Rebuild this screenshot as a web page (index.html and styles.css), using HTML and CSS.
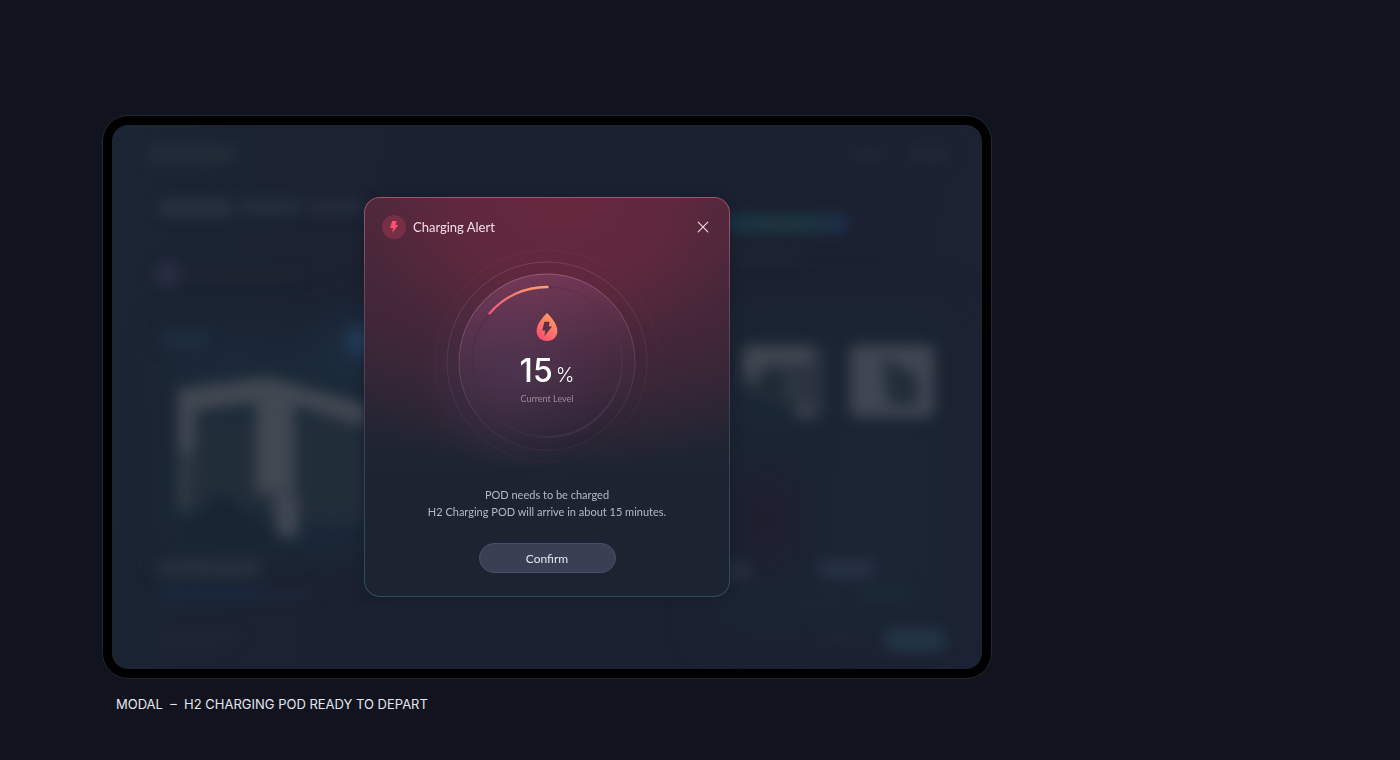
FILE: index.html
```
<!DOCTYPE html>
<html lang="en">
<head>
    <meta charset="UTF-8">
    <meta name="viewport" content="width=device-width, initial-scale=1.0">
    <title>Charging Alert</title>
    <link rel="stylesheet" href="styles.css">
</head>
<body>

    <figure class="showcase">
        <div class="device">
            <div class="screen">
                <!-- blurred dashboard behind the modal -->
                <svg class="backdrop" viewBox="0 0 870 544" preserveAspectRatio="none" aria-hidden="true">
                    <defs>
                        <filter id="soft" x="-20%" y="-20%" width="140%" height="140%" color-interpolation-filters="sRGB"><feGaussianBlur stdDeviation="7"/></filter>
                        <filter id="wide" x="-50%" y="-50%" width="200%" height="200%" color-interpolation-filters="sRGB"><feGaussianBlur stdDeviation="22"/></filter>
                        <linearGradient id="bar" x1="0" x2="1" y1="0" y2="0">
                            <stop offset="0" stop-color="#1c3543"/>
                            <stop offset="0.6" stop-color="#1d3943"/>
                            <stop offset="1" stop-color="#1d2f4e"/>
                        </linearGradient>
                    </defs>
                    <g filter="url(#wide)">
                        <rect x="60" y="210" width="210" height="220" fill="#1b2c3c" opacity="0.7"/>
                        <rect x="600" y="180" width="230" height="330" fill="#1b2735" opacity="0.7"/>
                        <rect x="630" y="350" width="50" height="90" fill="#201c2e"/>
                        <ellipse cx="248" cy="216" rx="26" ry="24" fill="#1f344a"/>
                    </g>
                    <g filter="url(#soft)">
                        <rect x="36" y="20" width="88" height="18" fill="#232d3a"/>
                        <rect x="48" y="76" width="72" height="14" fill="#2c3543"/>
                        <rect x="128" y="74" width="60" height="16" fill="#242e3c"/>
                        <rect x="196" y="74" width="60" height="16" fill="#232b3c"/>
                        <circle cx="56" cy="149" r="12" fill="#2b2e45"/>
                        <rect x="76" y="146" width="110" height="7" fill="#1f2532"/>
                        <rect x="50" y="206" width="46" height="18" fill="#1e2d3e"/>
                        <circle cx="250" cy="216" r="15" fill="#243b57"/>

                        <path d="M76 296L252 290V398L180 396L110 376L76 388Z" fill="#222d3a"/>
                        <path d="M66 264L156 252L256 280V302L182 280V368H144V278L84 286L82 330H66Z" fill="#424852"/>
                        <path d="M66 326H82L78 386H66Z" fill="#303a45"/>
                        <path d="M160 370H186V412H166Z" fill="#414753"/>
                        <path d="M70 406L110 366L150 404L186 420H80Z" fill="#192432"/>

                        <rect x="46" y="436" width="102" height="14" fill="#283341"/>
                        <rect x="48" y="464" width="100" height="12" fill="#1b2942"/>
                        <rect x="150" y="464" width="50" height="10" fill="#1e273a"/>
                        <rect x="44" y="508" width="80" height="10" fill="#202534"/>

                        <rect x="738" y="24" width="36" height="12" fill="#202735"/>
                        <rect x="796" y="22" width="40" height="14" fill="#212837"/>
                        <rect x="612" y="90" width="124" height="17" fill="url(#bar)"/>
                        <rect x="612" y="126" width="80" height="10" fill="#1f2534"/>

                        <rect x="630" y="220" width="82" height="74" rx="10" fill="#2b3440"/>
                        <path d="M632 222H700V238H650L646 252H632Z" fill="#434953"/>
                        <circle cx="660" cy="258" r="12" fill="#1d2835"/>
                        <path d="M628 262L690 282L680 302H628Z" fill="#1b2634"/>
                        <circle cx="692" cy="286" r="9" fill="#3a414d"/>
                        <rect x="738" y="220" width="84" height="72" rx="6" fill="#404752"/>
                        <path d="M770 232L806 250V280H776Z" fill="#222d3a"/>

                        <rect x="612" y="438" width="26" height="16" fill="#282f40"/>
                        <rect x="708" y="436" width="54" height="15" fill="#293448"/>
                        <rect x="746" y="464" width="54" height="8" fill="#1d2c3b"/>
                        <rect x="772" y="504" width="62" height="22" rx="10" fill="#233645"/>
                        <rect x="706" y="508" width="50" height="9" fill="#1f2534"/>
                    </g>
                </svg>

                <div class="modal" role="dialog" aria-labelledby="modal-title">
                    <header class="modal-header">
                        <span class="alert-icon">
                            <svg width="10" height="14" viewBox="0 0 10 14" aria-hidden="true">
                                <path d="M3.2 1H7.6L6.6 4.9H9.2L3.2 13L4.2 8.1H1Z" fill="#ff4f70"/>
                            </svg>
                        </span>
                        <h1 id="modal-title">Charging Alert</h1>
                        <button class="close" type="button" aria-label="Close">
                            <svg width="12" height="12" viewBox="0 0 12 12" aria-hidden="true">
                                <path d="M1.2 1.2L10.8 10.8M10.8 1.2L1.2 10.8" stroke="#f3dfe7" stroke-width="1.1" stroke-linecap="round"/>
                            </svg>
                        </button>
                    </header>

                    <div class="dial">
                        <svg class="dial-rings" viewBox="0 0 230 230" fill="none" aria-hidden="true">
                            <defs>
                                <linearGradient id="disc" x1="0.4" y1="0" x2="0.6" y2="1">
                                    <stop offset="0" stop-color="#8c4c74" stop-opacity="0.45"/>
                                    <stop offset="0.5" stop-color="#5c3c5e" stop-opacity="0.22"/>
                                    <stop offset="1" stop-color="#241c2c" stop-opacity="0.3"/>
                                </linearGradient>
                                <linearGradient id="ring" x1="0.4" y1="0" x2="0.6" y2="1">
                                    <stop offset="0" stop-color="#d897b4" stop-opacity="0.42"/>
                                    <stop offset="0.55" stop-color="#b58bb0" stop-opacity="0.22"/>
                                    <stop offset="1" stop-color="#b58bb0" stop-opacity="0.06"/>
                                </linearGradient>
                                <linearGradient id="track" x1="0" y1="0.2" x2="0.7" y2="1">
                                    <stop offset="0" stop-color="#3d2748" stop-opacity="0.4"/>
                                    <stop offset="0.5" stop-color="#3d2748" stop-opacity="0.1"/>
                                    <stop offset="1" stop-color="#6a5a78" stop-opacity="0.25"/>
                                </linearGradient>
                                <linearGradient id="level" x1="1" y1="0" x2="0" y2="1">
                                    <stop offset="0" stop-color="#ff9d6c"/>
                                    <stop offset="1" stop-color="#f0567c"/>
                                </linearGradient>
                            </defs>
                            <circle cx="115" cy="115" r="112" stroke="url(#ring)" stroke-opacity="0.12"/>
                            <circle cx="115" cy="115" r="100" stroke="url(#ring)" stroke-opacity="0.5"/>
                            <circle cx="115" cy="115" r="88" fill="url(#disc)" stroke="url(#ring)"/>
                            <circle cx="115" cy="115" r="75" stroke="url(#track)" stroke-width="2"/>
                            <path d="M115.5 40A75 75 0 0 0 57.5 66.5" stroke="url(#level)" stroke-width="2.4" stroke-linecap="round"/>
                        </svg>
                        <div class="reading">
                            <svg width="22" height="30" viewBox="0 0 22 30" aria-hidden="true">
                                <defs>
                                    <linearGradient id="drop" x1="0.8" y1="0.1" x2="0.3" y2="1">
                                        <stop offset="0" stop-color="#ff9c62"/>
                                        <stop offset="1" stop-color="#fc4f70"/>
                                    </linearGradient>
                                </defs>
                                <path d="M11 1C13 3 21.4 11 21.4 19C21.4 25 16.8 29 11 29S0.6 25 0.6 19C0.6 11 9 3 11 1Z" fill="url(#drop)"/>
                                <path d="M8.4 9.8H13.6L12.8 14.4H16L8.3 24.3L9.3 18.6H6.2Z" fill="#592f49"/>
                            </svg>
                            <p class="value">15<span>%</span></p>
                            <p class="label">Current Level</p>
                        </div>
                    </div>

                    <p class="message">POD needs to be charged<br>H2 Charging POD will arrive in about 15 minutes.</p>
                    <button class="confirm" type="button">Confirm</button>
                </div>
            </div>
        </div>
        <figcaption>MODAL &nbsp;–&nbsp; H2 CHARGING POD READY TO DEPART</figcaption>
    </figure>

</body>
</html>
```
FILE: styles.css
```
* {
    box-sizing: border-box;
}

body {
    margin: 0;
    min-height: 100vh;
    background-color: #11141f;
    color: #e4e6ee;
    font-family: Lato, sans-serif;
}

h1, p, figure {
    margin: 0;
}

button {
    border: none;
    cursor: pointer;
    font-family: inherit;
}

.showcase {
    max-width: 992px;
    padding: 115px 0 0 102px;
}

.device {
    padding: 9px;
    background-color: #000;
    border: 1px solid #24272d;
    border-radius: 26px;
}

.screen {
    position: relative;
    display: grid;
    place-items: center;
    min-height: 544px;
    overflow: hidden;
    background-color: #1b2130;
    background-image: linear-gradient(100deg, #1b2534, #1b2130 35%, #1b2130 80%, #1c2334);
    border-radius: 16px;
}

.backdrop {
    position: absolute;
    inset: 0;
    width: 100%;
    height: 100%;
}

.modal {
    position: relative;
    display: flex;
    flex-direction: column;
    align-items: center;
    width: 366px;
    max-width: 100%;
    padding: 17px 17px 23px;
    border: 1px solid transparent;
    border-radius: 16px;
    background:
        radial-gradient(circle at 42% 44%, rgba(84, 62, 96, 0.45), rgba(84, 62, 96, 0) 32%) padding-box,
        radial-gradient(ellipse 95% 69% at 54% 0%, #65283d 0%, #60283e 30%, rgba(80, 38, 58, 0.6) 60%, rgba(29, 36, 49, 0) 100%) padding-box,
        linear-gradient(#462a3d, #1d2431 68%) padding-box,
        linear-gradient(#a3566f, #6b4560 25%, #3c4152 55%, #2d4d5c) border-box;
    box-shadow: 0 0 12px rgba(15, 20, 32, 0.4);
}

.modal-header {
    display: flex;
    align-items: center;
    gap: 7px;
    width: 100%;
}

.modal-header h1 {
    flex: 1;
    color: #f5dfe7;
    font-size: 13px;
    font-weight: 400;
    line-height: 24px;
}

.alert-icon {
    display: grid;
    place-items: center;
    width: 24px;
    height: 24px;
    background-color: #782f46;
    border-radius: 50%;
}

.close {
    display: grid;
    place-items: center;
    width: 18px;
    height: 18px;
    padding: 0;
    background: none;
}

.dial {
    display: grid;
    place-items: center;
    margin-top: 8px;
}

.dial-rings,
.reading {
    grid-area: 1 / 1;
}

.dial-rings {
    width: 230px;
    height: 230px;
}

.reading {
    display: flex;
    flex-direction: column;
    align-items: center;
    padding-bottom: 6px;
}

.value {
    display: flex;
    align-items: baseline;
    gap: 3px;
    margin-top: 12px;
    color: #fff;
    font-family: Inter, sans-serif;
    font-size: 32px;
    font-weight: 500;
    line-height: 34px;
}

.value span {
    font-size: 20px;
    font-weight: 300;
}

.label {
    color: #9a8ba0;
    font-size: 9px;
    line-height: 14px;
}

.message {
    margin-top: 9px;
    color: #b4b9c5;
    font-size: 11px;
    line-height: 17px;
    text-align: center;
}

.confirm {
    width: 137px;
    height: 30px;
    margin-top: 23px;
    background-color: #3a4053;
    border: 1px solid #494f66;
    border-radius: 15px;
    color: #e3e6ef;
    font-size: 12px;
}

figcaption {
    padding: 16px 14px;
    font-family: Inter, sans-serif;
    font-size: 13px;
    line-height: 18px;
}
```
